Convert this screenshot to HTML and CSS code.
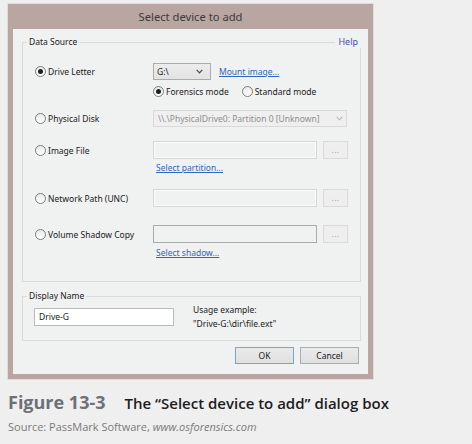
FILE: index.html
```html
<!DOCTYPE html>
<html>
<head>
<meta charset="utf-8">
<meta name="viewport" content="width=device-width, initial-scale=1">
<link rel="stylesheet" href="styles.css">
</head>
<body>
<div class="page">
  <div class="dialog">
    <div class="titlebar">Select device to add</div>
    <div class="panel">
      <div class="group datasrc">
        <span class="legend">Data Source</span>
        <span class="help">Help</span>

        <div class="row h18">
          <div class="opt"><span class="radio checked"></span>Drive Letter</div>
          <div class="ctrl">
            <div class="combo drive"><span>G:\</span><svg class="chev" width="7" height="5" viewBox="0 0 7 5"><path d="M0.7 0.8 L3.5 3.8 L6.3 0.8" fill="none" stroke="#4a4a4a" stroke-width="1.2"/></svg></div>
            <span class="link mount">Mount image...</span>
          </div>
        </div>

        <div class="row h14 mt4">
          <div></div>
          <div class="ctrl">
            <div class="opt"><span class="radio checked"></span>Forensics mode</div>
            <div class="opt std"><span class="radio"></span>Standard mode</div>
          </div>
        </div>

        <div class="row h18 mt11">
          <div class="opt"><span class="radio"></span>Physical Disk</div>
          <div class="ctrl">
            <div class="combo disk"><span>\\.\PhysicalDrive0: Partition 0 [Unknown]</span><svg class="chev" width="7" height="5" viewBox="0 0 7 5"><path d="M0.7 0.8 L3.5 3.8 L6.3 0.8" fill="none" stroke="#b8b8b8" stroke-width="1.1"/></svg></div>
          </div>
        </div>

        <div class="row h18 mt14">
          <div class="opt"><span class="radio"></span>Image File</div>
          <div class="ctrl">
            <div class="textbox"></div>
            <div class="dots">...</div>
          </div>
        </div>
        <div class="row h14 mt1">
          <div></div>
          <div class="ctrl"><span class="link sub">Select partition...</span></div>
        </div>

        <div class="row h18 mt15">
          <div class="opt"><span class="radio"></span>Network Path (UNC)</div>
          <div class="ctrl">
            <div class="textbox"></div>
            <div class="dots">...</div>
          </div>
        </div>

        <div class="row h18 mt18">
          <div class="opt"><span class="radio"></span>Volume Shadow Copy</div>
          <div class="ctrl">
            <div class="textbox dark"></div>
            <div class="dots">...</div>
          </div>
        </div>
        <div class="row h14 mt2">
          <div></div>
          <div class="ctrl"><span class="link sub">Select shadow...</span></div>
        </div>
      </div>

      <div class="group display">
        <span class="legend">Display Name</span>
        <div class="name-row">
          <div class="namebox">Drive-G</div>
          <div class="usage">
            <div>Usage example:</div>
            <div>"Drive-G:\dir\file.ext"</div>
          </div>
        </div>
      </div>

      <div class="buttons">
        <div class="btn default">OK</div>
        <div class="btn">Cancel</div>
      </div>
    </div>
  </div>

  <div class="caption">
    <div class="fig"><span class="fignum">Figure 13-3</span><span class="figtitle">The “Select device to add” dialog box</span></div>
    <div class="credit">Source: PassMark Software, <em>www.osforensics.com</em></div>
  </div>
</div>
</body>
</html>
```
FILE: styles.css
```css
html {
  -webkit-text-size-adjust: 100%;
  text-size-adjust: 100%;
}

html, body {
  margin: 0;
  padding: 0;
  background: #efefef;
}

.page {
  width: 472px;
  height: 444px;
  padding-top: 4px;
  box-sizing: border-box;
  overflow: hidden;
}

.dialog {
  margin-left: 8px;
  width: 365px;
  height: 375px;
  background: #b9a6a2;
  box-shadow: 0 0 0 1px #dedede;
  display: flex;
  flex-direction: column;
  font-family: "Noto Sans", sans-serif;
  font-size: 8.5px;
  color: #1a1a1a;
}

.titlebar {
  height: 25px;
  line-height: 25px;
  text-align: center;
  font-size: 11.2px;
  color: #3a3a3a;
}

.panel {
  margin: 0 5px 5px 5px;
  flex: 1;
  background: #f0f1f1;
  padding: 13px 7px 0 9px;
  display: flex;
  flex-direction: column;
}

.group {
  position: relative;
  border: 1px solid #d9dada;
}

.datasrc {
  padding: 19px 0 22px 12px;
}

.legend {
  position: absolute;
  top: -8px;
  left: 4px;
  line-height: 14px;
  padding: 0 2px;
  background: #f0f1f1;
}

.help {
  position: absolute;
  top: -8px;
  right: -2px;
  height: 13px;
  line-height: 14px;
  padding: 0 4px 0 3px;
  background: #f0f1f1;
  color: #4a52a6;
  font-size: 9px;
}

.row {
  display: grid;
  grid-template-columns: 118px 1fr;
  align-items: center;
}

.h18 { height: 18px; }
.h14 { height: 14px; }
.mt1 { margin-top: 1px; }
.mt2 { margin-top: 2px; }
.mt4 { margin-top: 4px; }
.mt11 { margin-top: 11px; }
.mt14 { margin-top: 14px; }
.mt15 { margin-top: 15px; }
.mt18 { margin-top: 18px; }

.opt {
  display: flex;
  align-items: center;
  white-space: nowrap;
}

.radio {
  width: 9px;
  height: 9px;
  border: 1px solid #7c7c7c;
  border-radius: 50%;
  background: linear-gradient(#e9e9e9, #ffffff);
  margin-right: 2px;
  display: flex;
  align-items: center;
  justify-content: center;
  flex: none;
}

.radio.checked::after {
  content: "";
  width: 5px;
  height: 5px;
  border-radius: 50%;
  background: #1f1f1f;
}

.ctrl {
  display: flex;
  align-items: center;
  height: 100%;
}

.std {
  margin-left: 13px;
}

.combo {
  box-sizing: border-box;
  height: 17px;
  display: flex;
  align-items: center;
  justify-content: space-between;
  padding: 0 7px 0 3px;
  white-space: nowrap;
}

.combo.drive {
  width: 58px;
  background: linear-gradient(#ececec, #e3e3e3);
  border: 1px solid #acacac;
}

.combo.disk {
  width: 194px;
  background: #efefef;
  border: 1px solid #d9d9d9;
  color: #8e8e8e;
  padding-left: 4px;
  padding-right: 3px;
}

.link {
  color: #2f66ba;
  text-decoration: underline;
  white-space: nowrap;
}

.mount {
  margin-left: 8px;
}

.sub {
  margin-left: 3px;
}

.textbox {
  box-sizing: border-box;
  width: 164px;
  height: 18px;
  border: 1px solid #d6d7d7;
  background: #f0f1f1;
  box-shadow: inset 0 0 0 1px #fbfbfb;
}

.textbox.dark {
  border-color: #a9abab;
  box-shadow: none;
}

.dots {
  box-sizing: border-box;
  width: 25px;
  height: 18px;
  margin-left: 6px;
  border: 1px solid #dadada;
  background: #eeeeee;
  color: #9c9c9c;
  font-size: 8px;
  line-height: 16px;
  text-align: center;
  letter-spacing: 0.5px;
}

.display {
  margin-top: 14px;
  padding: 6px 0 9px 11px;
}

.name-row {
  display: flex;
  align-items: center;
}

.namebox {
  box-sizing: border-box;
  width: 140px;
  height: 18px;
  background: #ffffff;
  border: 1px solid #b9baba;
  line-height: 16px;
  padding-left: 4px;
}

.usage {
  margin-left: 19px;
  line-height: 14px;
}

.buttons {
  display: flex;
  justify-content: flex-end;
  margin-top: 6px;
  margin-right: 2px;
}

.btn {
  box-sizing: border-box;
  width: 59px;
  height: 17px;
  line-height: 15px;
  text-align: center;
  border: 1px solid #adadad;
  background: linear-gradient(#eaeaea, #e0e0e0);
  margin-left: 6px;
}

.btn.default {
  border-color: #74a4d8;
}

.caption {
  margin-top: 12px;
  padding-left: 8px;
  font-family: "Open Sans", sans-serif;
}

.fig {
  display: flex;
  align-items: baseline;
  line-height: 22px;
}

.fignum {
  font-size: 18px;
  font-weight: 700;
  color: #6c7077;
}

.figtitle {
  margin-left: 19px;
  font-size: 15px;
  font-weight: 600;
  color: #1d1d1d;
}

.credit {
  margin-top: 5px;
  font-size: 11px;
  line-height: 15px;
  color: #7a7a7a;
}

.credit em {
  font-style: italic;
}
```
